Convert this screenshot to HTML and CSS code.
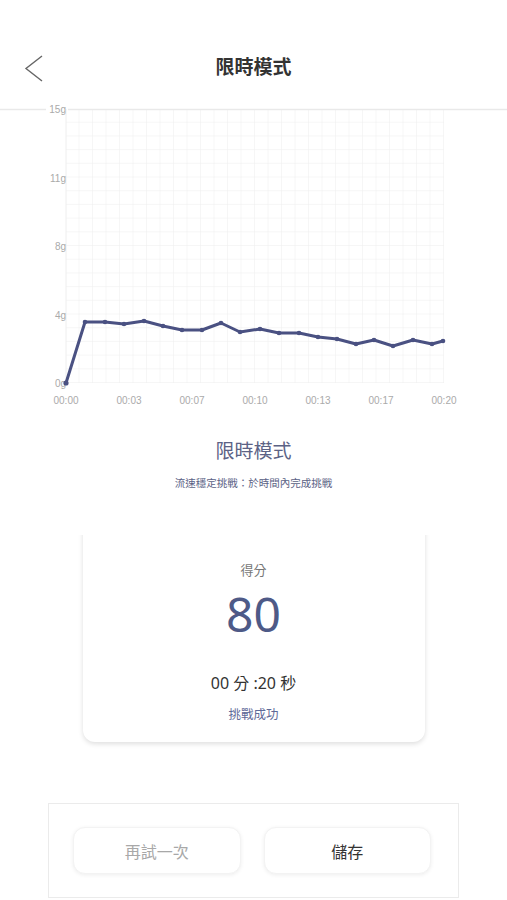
FILE: index.html
```html
<!DOCTYPE html>
<html lang="zh-Hant">
<head>
    <meta charset="UTF-8">
    <title>限時模式</title>
    <link rel="stylesheet" href="styles.css">
</head>
<body>

<div class="page">
    <header class="topbar">
        <a class="back">
            <svg width="20" height="30" viewBox="0 0 20 30">
                <polyline points="18,3 2,15.5 18,28" fill="none" stroke="#666" stroke-width="1.4"/>
            </svg>
        </a>
        <h1>限時模式</h1>
        <span></span>
    </header>

    <!-- 流速圖表 -->
    <svg class="chart" width="507" height="315" viewBox="0 100 507 315">
        <defs>
            <pattern id="grid" x="66" y="109" width="13.5" height="13.7" patternUnits="userSpaceOnUse">
                <path d="M13.5 0V13.7M0 13.7H13.5" fill="none" stroke="#eeeeee" stroke-width="1"/>
            </pattern>
        </defs>
        <rect x="66" y="109" width="378" height="274" fill="url(#grid)"/>
        <line x1="66" y1="109" x2="66" y2="383" stroke="#eeeeee"/>
        <line x1="0" y1="109.5" x2="46" y2="109.5" stroke="#e9e9e9" stroke-width="1.5"/>
        <line x1="68" y1="109.5" x2="507" y2="109.5" stroke="#e9e9e9" stroke-width="1.5"/>

        <g class="axis-y" text-anchor="end">
            <text x="66" y="113">15g</text>
            <text x="66" y="182">11g</text>
            <text x="66" y="250">8g</text>
            <text x="66" y="319">4g</text>
            <text x="66" y="387">0g</text>
        </g>
        <g class="axis-x" text-anchor="middle">
            <text x="66" y="404">00:00</text>
            <text x="129" y="404">00:03</text>
            <text x="192" y="404">00:07</text>
            <text x="255" y="404">00:10</text>
            <text x="318" y="404">00:13</text>
            <text x="381" y="404">00:17</text>
            <text x="444" y="404">00:20</text>
        </g>

        <polyline class="flow" points="66,383 85,322 105,322 124,324 144,321 163,326 182,330 202,330 221,323 240,332 260,329 279,333 299,333 318,337 337,339 356,344 374,340 393,346 413,340 432,344 443,341"/>
        <g class="dots">
            <circle cx="66" cy="383" r="2.6"/>
            <circle cx="85" cy="322" r="2.3"/>
            <circle cx="105" cy="322" r="2.3"/>
            <circle cx="124" cy="324" r="2.3"/>
            <circle cx="144" cy="321" r="2.3"/>
            <circle cx="163" cy="326" r="2.3"/>
            <circle cx="182" cy="330" r="2.3"/>
            <circle cx="202" cy="330" r="2.3"/>
            <circle cx="221" cy="323" r="2.3"/>
            <circle cx="240" cy="332" r="2.3"/>
            <circle cx="260" cy="329" r="2.3"/>
            <circle cx="279" cy="333" r="2.3"/>
            <circle cx="299" cy="333" r="2.3"/>
            <circle cx="318" cy="337" r="2.3"/>
            <circle cx="337" cy="339" r="2.3"/>
            <circle cx="356" cy="344" r="2.3"/>
            <circle cx="374" cy="340" r="2.3"/>
            <circle cx="393" cy="346" r="2.3"/>
            <circle cx="413" cy="340" r="2.3"/>
            <circle cx="432" cy="344" r="2.3"/>
            <circle cx="443" cy="341" r="2.3"/>
        </g>
    </svg>

    <section class="mode">
        <h2>限時模式</h2>
        <p>流速穩定挑戰：於時間內完成挑戰</p>
    </section>

    <div class="card">
        <div class="label">得分</div>
        <div class="score">80</div>
        <div class="time">00 分 :20 秒</div>
        <div class="result">挑戰成功</div>
    </div>

    <div class="actions">
        <button class="btn retry">再試一次</button>
        <button class="btn save">儲存</button>
    </div>
</div>

</body>
</html>
```

FILE: styles.css
```css
* {
    box-sizing: border-box;
    margin: 0;
    padding: 0;
}

body {
    font-family: "Noto Sans", "Noto Sans CJK TC", sans-serif;
    background-color: #fff;
    color: #333;
}

.page {
    width: 507px;
    margin: 0 auto;
}

.topbar {
    height: 100px;
    padding: 53px 24px 0;
    display: grid;
    grid-template-columns: 1fr auto 1fr;
    align-items: start;
}

.back {
    display: block;
    width: 20px;
    height: 30px;
    cursor: pointer;
}

.topbar h1 {
    font-size: 19px;
    font-weight: bold;
    line-height: 28px;
    color: #333;
}

.chart {
    display: block;
}

.chart text {
    font-family: "Liberation Sans", Arial, sans-serif;
    font-size: 10px;
    fill: #aaaaaa;
}

.flow {
    fill: none;
    stroke: #4a5182;
    stroke-width: 3;
    stroke-linejoin: round;
}

.dots circle {
    fill: #4a5182;
}

.mode {
    position: relative;
    z-index: 1;
    background-color: #fff;
    padding: 22px 0 44px;
    text-align: center;
    color: #5b6285;
}

.mode h2 {
    font-size: 19px;
    font-weight: normal;
    line-height: 28px;
}

.mode p {
    margin-top: 10px;
    font-size: 10.5px;
    line-height: 16px;
}

.card {
    width: 342px;
    margin: -20px auto 0;
    padding: 46px 0 18px;
    background-color: #fff;
    border-radius: 12px;
    box-shadow: 0 2px 5px rgba(0, 0, 0, 0.13);
    text-align: center;
}

.card .label {
    font-size: 13px;
    line-height: 18px;
    color: #777;
}

.card .score {
    margin-top: 7px;
    font-size: 48px;
    line-height: 56px;
    color: #4e5a87;
}

.card .time {
    margin-top: 30px;
    font-size: 16px;
    line-height: 22px;
    color: #333;
}

.card .result {
    margin-top: 12px;
    font-size: 12.5px;
    line-height: 18px;
    color: #5f6a98;
}

.actions {
    width: 411px;
    margin: 61px 0 0 48px;
    padding: 23px 27px 23px 24px;
    border: 1px solid #ebebeb;
    display: grid;
    grid-template-columns: 1fr 1fr;
    gap: 23px;
}

.btn {
    height: 47px;
    font-family: inherit;
    font-size: 16px;
    background-color: #fff;
    border: 1px solid #f3f3f3;
    border-radius: 12px;
    box-shadow: 0 1px 4px rgba(0, 0, 0, 0.07);
    cursor: pointer;
}

.retry {
    color: #a8a8a8;
}

.save {
    color: #333;
}
```
